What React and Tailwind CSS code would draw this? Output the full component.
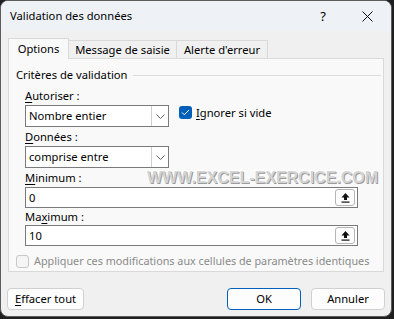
import React from "react";

const font = { fontFamily: '"Noto Sans", "Liberation Sans", sans-serif' };

function Chevron() {
  return (
    <svg width="9" height="5" viewBox="0 0 9 5" fill="none">
      <path d="M0.5 0.5L4.5 4.5L8.5 0.5" stroke="#606060" strokeWidth="1" />
    </svg>
  );
}

function Combo({ value }) {
  return (
    <div className="flex h-[22px] w-[144px] items-stretch border border-[#7a7a7a] bg-white">
      <div className="flex flex-1 items-center pl-[3px] text-[11.2px] leading-[16px] text-black">{value}</div>
      <div className="flex w-[17px] items-center justify-center border-l border-[#d0d0d0]">
        <Chevron />
      </div>
    </div>
  );
}

function RefInput({ value }) {
  return (
    <div className="flex h-[21px] w-[333px] items-center border border-[#7a7a7a] bg-white pr-[2px]">
      <div className="flex-1 pl-[3px] text-[11.2px] leading-[16px] text-black">{value}</div>
      <div className="flex h-[17px] w-[20px] items-center justify-center rounded-[3px] border border-[#b5b5b5] bg-[#fdfdfd]">
        <svg width="9" height="10" viewBox="0 0 9 10">
          <path d="M4.5 0L8.5 4.5H6V7H3V4.5H0.5Z" fill="#111" />
          <rect x="0.5" y="8.5" width="8" height="1.2" fill="#111" />
        </svg>
      </div>
    </div>
  );
}

function Label({ children }) {
  return <div className="h-[16px] text-[11.2px] leading-[16px] text-black">{children}</div>;
}

function U({ children }) {
  return <span className="underline underline-offset-[2px]">{children}</span>;
}

export default function App() {
  return (
    <div className="h-[319px] w-[394px] bg-[#1f1f1f]" style={font}>
      <div className="relative flex h-[317px] w-[392px] flex-col overflow-hidden rounded-[8px] border border-[#5c5c5c] bg-[#f0f0f0]">
        {/* title bar */}
        <div className="flex h-[30px] items-center bg-[#eef2f6] pl-[9px] text-[11.2px] leading-[16px] text-black">
          <span className="flex-1">Validation des données</span>
          <span className="mr-[36px] text-[13px]">?</span>
          <svg className="mr-[18px]" width="11" height="11" viewBox="0 0 11 11">
            <path d="M0.5 0.5L10.5 10.5M10.5 0.5L0.5 10.5" stroke="#111" strokeWidth="1" />
          </svg>
        </div>

        {/* tabs */}
        <div className="mt-[7px] flex items-end pl-[7px] text-[11.2px] leading-[16px] text-black">
          <div className="z-10 -mb-px flex h-[21px] w-[61px] items-center justify-center border border-b-0 border-[#d9d9d9] bg-[#f9f9f9]">
            Options
          </div>
          <div className="flex h-[18px] w-[108px] items-center justify-center border border-l-0 border-b-0 border-[#d9d9d9] bg-[#f0f0f0]">
            Message de saisie
          </div>
          <div className="flex h-[18px] w-[91px] items-center justify-center border border-l-0 border-b-0 border-[#d9d9d9] bg-[#f0f0f0]">
            Alerte d'erreur
          </div>
        </div>

        {/* panel */}
        <div className="relative mx-[7px] h-[214px] border border-[#d9d9d9] bg-[#f9f9f9]">
          <div className="mt-[8px] flex h-[16px] items-center pl-[7px] text-[11.2px] leading-[16px] text-black">
            <span>Critères de validation</span>
            <div className="ml-[5px] mr-[2px] h-px flex-1 bg-[#dcdcdc]" />
          </div>

          <div className="mt-[5px] pl-[16px]">
            <Label>
              <U>A</U>utoriser :
            </Label>
            <div className="mt-[1px] flex items-start">
              <Combo value="Nombre entier" />
              <div className="ml-[10px] mt-[1px] flex h-[13px] items-center">
                <div className="flex h-[13px] w-[13px] items-center justify-center rounded-[3px] bg-[#005fb8]">
                  <svg width="9" height="7" viewBox="0 0 9 7">
                    <path d="M1 3.5L3.3 5.8L8 1" stroke="#fff" strokeWidth="1" fill="none" />
                  </svg>
                </div>
                <span className="ml-[4px] text-[11.2px] leading-[16px] text-black">
                  <U>I</U>gnorer si vide
                </span>
              </div>
            </div>

            <div className="mt-[2px]">
              <Label>
                <U>D</U>onnées :
              </Label>
            </div>
            <div className="mt-[1px]">
              <Combo value="comprise entre" />
            </div>

            <div className="mt-[2px]">
              <Label>
                <U>M</U>inimum :
              </Label>
            </div>
            <div className="mt-[1px]">
              <RefInput value="0" />
            </div>

            <div className="mt-[1px]">
              <Label>
                Ma<U>x</U>imum :
              </Label>
            </div>
            <div>
              <RefInput value="10" />
            </div>
          </div>

          <div className="mt-[7px] flex h-[16px] items-center pl-[7px]">
            <div className="h-[13px] w-[13px] rounded-[3px] border border-[#c8c8c8] bg-[#f5f5f5]" />
            <span className="ml-[5px] whitespace-nowrap text-[10.8px] leading-[16px] text-[#8a8a8a]">
              Appliquer ces modifications aux cellules de paramètres identiques
            </span>
          </div>

          {/* watermark */}
          <div
            className="absolute left-[138px] top-[110px] whitespace-nowrap text-[16px] font-bold leading-[18px] text-[#d4d4d4]"
            style={{ fontFamily: '"Liberation Sans", sans-serif', textShadow: "1px 1px 0 #9c9c9c, -1px -1px 0 #ffffff" }}
          >
            WWW.EXCEL-EXERCICE.COM
          </div>
        </div>

        {/* buttons */}
        <div className="mt-[16px] flex items-center pl-[6px] pr-[6px] text-[11.2px] leading-[16px] text-black">
          <div className="flex h-[22px] w-[77px] items-center justify-center rounded-[4px] border border-[#d0d0d0] bg-[#fdfdfd]">
            <span>
              <U>E</U>ffacer tout
            </span>
          </div>
          <div className="flex-1" />
          <div className="flex h-[22px] w-[74px] items-center justify-center rounded-[4px] border border-[#005fb8] bg-[#fdfdfd]">
            OK
          </div>
          <div className="ml-[10px] flex h-[22px] w-[74px] items-center justify-center rounded-[4px] border border-[#d0d0d0] bg-[#fdfdfd]">
            Annuler
          </div>
        </div>
      </div>
    </div>
  );
}
